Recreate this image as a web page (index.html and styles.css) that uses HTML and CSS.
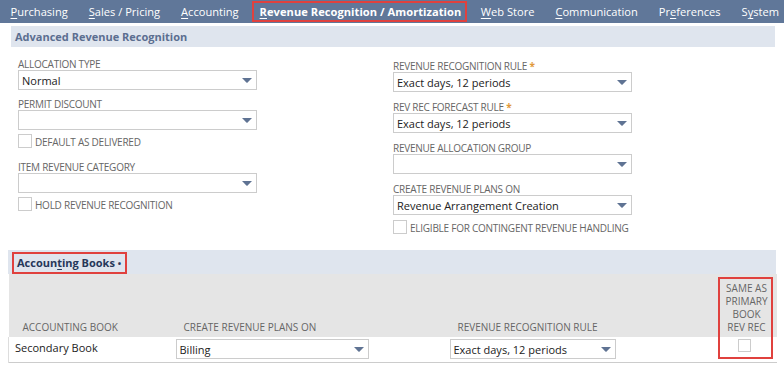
FILE: index.html
```html
<!DOCTYPE html>
<html lang="en">
<head>
    <meta charset="UTF-8">
    <title>Item - Revenue Recognition</title>
    <link rel="stylesheet" href="styles.css">
</head>
<body>

    <nav class="tabs">
        <a href="#"><u>P</u>urchasing</a>
        <a href="#"><u>S</u>ales / Pricing</a>
        <a href="#"><u>A</u>ccounting</a>
        <a href="#" class="active"><u>R</u>evenue Recognition / Amortization</a>
        <a href="#"><u>W</u>eb Store</a>
        <a href="#"><u>C</u>ommunication</a>
        <a href="#">Pr<u>e</u>ferences</a>
        <a href="#">S<u>y</u>stem</a>
    </nav>

    <div class="section-head">Advanced Revenue Recognition</div>

    <div class="fields">
        <div class="col left">
            <div class="field">
                <label>Allocation Type</label>
                <div class="select">Normal<svg width="10" height="5" viewBox="0 0 10 5"><path d="M0 0H10L5.6 4.6Q5 5.1 4.4 4.6Z"/></svg></div>
            </div>
            <div class="field">
                <label>Permit Discount</label>
                <div class="select"><svg width="10" height="5" viewBox="0 0 10 5"><path d="M0 0H10L5.6 4.6Q5 5.1 4.4 4.6Z"/></svg></div>
                <div class="check"><span class="box"></span>Default as Delivered</div>
            </div>
            <div class="field">
                <label>Item Revenue Category</label>
                <div class="select"><svg width="10" height="5" viewBox="0 0 10 5"><path d="M0 0H10L5.6 4.6Q5 5.1 4.4 4.6Z"/></svg></div>
                <div class="check"><span class="box"></span>Hold Revenue Recognition</div>
            </div>
        </div>
        <div class="col right">
            <div class="field">
                <label>Revenue Recognition Rule <span class="req">*</span></label>
                <div class="select">Exact days, 12 periods<svg width="10" height="5" viewBox="0 0 10 5"><path d="M0 0H10L5.6 4.6Q5 5.1 4.4 4.6Z"/></svg></div>
            </div>
            <div class="field">
                <label>Rev Rec Forecast Rule <span class="req">*</span></label>
                <div class="select">Exact days, 12 periods<svg width="10" height="5" viewBox="0 0 10 5"><path d="M0 0H10L5.6 4.6Q5 5.1 4.4 4.6Z"/></svg></div>
            </div>
            <div class="field">
                <label>Revenue Allocation Group</label>
                <div class="select"><svg width="10" height="5" viewBox="0 0 10 5"><path d="M0 0H10L5.6 4.6Q5 5.1 4.4 4.6Z"/></svg></div>
            </div>
            <div class="field">
                <label>Create Revenue Plans On</label>
                <div class="select">Revenue Arrangement Creation<svg width="10" height="5" viewBox="0 0 10 5"><path d="M0 0H10L5.6 4.6Q5 5.1 4.4 4.6Z"/></svg></div>
                <div class="check"><span class="box"></span>Eligible for Contingent Revenue Handling</div>
            </div>
        </div>
    </div>

    <div class="books-head">
        <span class="books-title">Accoun<u>t</u>ing Books <span class="dot">&bull;</span></span>
    </div>

    <div class="books">
        <table class="book-list">
            <thead>
                <tr>
                    <th class="c1">Accounting Book</th>
                    <th class="c2">Create Revenue Plans On</th>
                    <th class="c3">Revenue Recognition Rule</th>
                    <th class="c4">Same as<br>Primary<br>Book<br>Rev Rec</th>
                </tr>
            </thead>
            <tbody>
                <tr>
                    <td class="c1">Secondary Book</td>
                    <td class="c2"><div class="select">Billing<svg width="10" height="5" viewBox="0 0 10 5"><path d="M0 0H10L5.6 4.6Q5 5.1 4.4 4.6Z"/></svg></div></td>
                    <td class="c3"><div class="select">Exact days, 12 periods<svg width="10" height="5" viewBox="0 0 10 5"><path d="M0 0H10L5.6 4.6Q5 5.1 4.4 4.6Z"/></svg></div></td>
                    <td class="c4"><span class="box"></span></td>
                </tr>
            </tbody>
        </table>
        <div class="mark"></div>
    </div>

</body>
</html>
```

FILE: styles.css
```css
body {
    font-family: "Open Sans", Arial, sans-serif;
    background: #fff;
    color: #222;
    margin: 0;
    padding: 0;
}

.tabs {
    display: flex;
    height: 23px;
    background: #607799;
    white-space: nowrap;
    overflow: hidden;
}

    .tabs a {
        color: #fff;
        text-decoration: none;
        font-size: 11.1px;
        line-height: 23px;
        padding: 0 10.5px;
    }

        .tabs a u {
            text-decoration-thickness: 1px;
            text-underline-offset: 2px;
        }

        .tabs a.active {
            font-weight: bold;
            letter-spacing: 0.05px;
            border: 2px solid #e0413e;
            line-height: 17px;
            height: 17px;
            margin: 1px 3px 0 2.5px;
            padding: 0 4px 0 6px;
        }

.section-head {
    margin: 3px 9px 0 11px;
    height: 21px;
    line-height: 21px;
    padding-left: 4px;
    background: #dfe5ee;
    color: #5b6e90;
    font-size: 11px;
    font-weight: bold;
}

.fields {
    display: grid;
    grid-template-columns: 375px 375px;
    padding: 9px 0 0 18px;
}

.field {
    margin-bottom: 6px;
}

.right {
    padding-top: 2px;
}

    .right .field {
        margin-bottom: 7px;
    }

.col .field:last-child {
    margin-bottom: 0;
}

.field label {
    display: block;
    font-size: 10px;
    letter-spacing: -0.25px;
    line-height: 11px;
    padding-top: 3px;
    color: #666;
    text-transform: uppercase;
}

.req {
    color: #e19a3c;
    font-weight: bold;
}

.select {
    display: flex;
    align-items: center;
    box-sizing: border-box;
    width: 239px;
    height: 20px;
    border: 1px solid #ccc;
    background: #fff;
    padding: 0 4px 0 3px;
    font-size: 11px;
    color: #222;
}

    .select svg {
        fill: #5f7393;
        flex-shrink: 0;
        margin-left: auto;
    }

.check {
    display: flex;
    align-items: flex-end;
    margin: 4px 0 0 0;
    height: 14px;
    font-size: 10px;
    letter-spacing: -0.25px;
    line-height: 12px;
    color: #666;
    text-transform: uppercase;
}

.left .check {
    margin-bottom: 11px;
}

.right .check {
    margin-top: 5px;
}

.box {
    display: inline-block;
    box-sizing: border-box;
    width: 14px;
    height: 14px;
    border: 1px solid #ccc;
    background: #fff;
    margin-right: 3px;
}

.books-head {
    margin: 16px 8px 0 8px;
    height: 24px;
    background: #dfe5ee;
    padding-left: 4px;
}

.books-title {
    display: inline-block;
    box-sizing: border-box;
    height: 22px;
    margin-top: 2px;
    padding: 0 4px 0 3px;
    border: 2px solid #e0413e;
    font-size: 11px;
    line-height: 18px;
    font-weight: bold;
    color: #26375a;
}

    .books-title u {
        text-decoration-thickness: 1px;
        text-underline-offset: 2px;
    }

    .books-title .dot {
        font-size: 9px;
        vertical-align: 0;
    }

.books {
    position: relative;
    margin: 0 8px;
}

.book-list {
    width: 768px;
    border-collapse: collapse;
    table-layout: fixed;
    border-bottom: 1px solid #ccc;
}

    .book-list th, .book-list td {
        box-sizing: border-box;
    }

    .book-list th {
        background: #e5e5e5;
        height: 63px;
        vertical-align: bottom;
        font-weight: normal;
        font-size: 10px;
        line-height: 13px;
        color: #666;
        text-transform: uppercase;
        text-align: left;
        padding: 0 0 3px 16px;
    }

    .book-list td {
        height: 25px;
        padding: 0 0 0 8px;
        font-size: 11px;
    }

    .book-list .c1 {
        width: 159px;
    }

    .book-list th.c1 {
        padding-left: 14px;
    }

    .book-list td.c1 {
        padding-left: 6px;
        padding-bottom: 3px;
        border-left: 1px solid #ddd;
    }

    .book-list .c2 {
        width: 274px;
    }

        .book-list .c2 .select {
            width: 193px;
        }

    .book-list .c3 {
        width: 277px;
    }

        .book-list .c3 .select {
            width: 166px;
        }

    .book-list .c4 {
        width: 58px;
    }

    .book-list th.c4 {
        text-align: center;
        padding-left: 0;
        padding-right: 2px;
    }

    .book-list td.c4 {
        vertical-align: top;
        padding: 2px 0 0 19px;
    }

        .book-list td.c4 .box {
            width: 13px;
            height: 13px;
            vertical-align: top;
        }

.mark {
    position: absolute;
    left: 710px;
    top: 3px;
    width: 55px;
    height: 82px;
    box-sizing: border-box;
    border: 2px solid #e0413e;
}
```
